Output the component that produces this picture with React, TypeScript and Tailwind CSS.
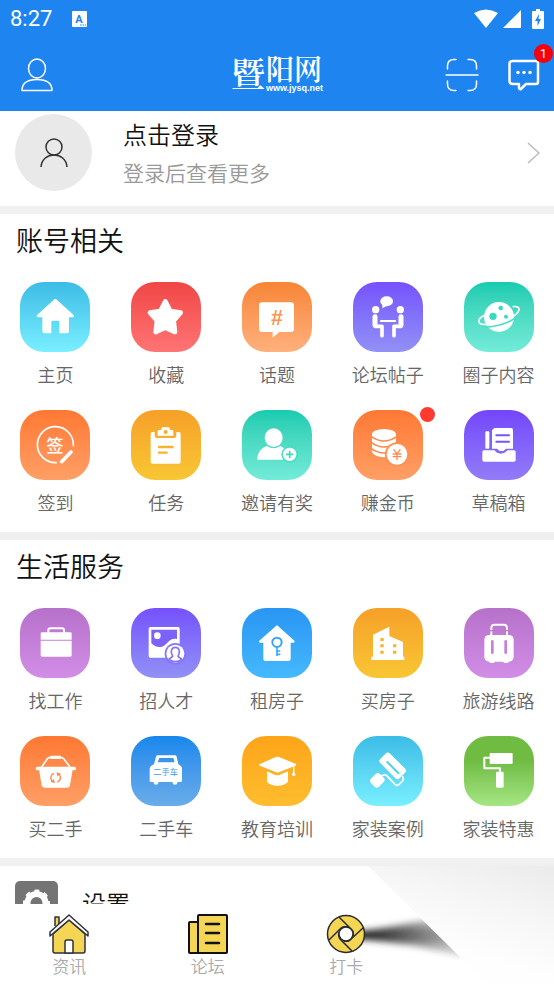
import type { ReactNode } from "react";

type Tile = {
  label: string;
  bg: string;
  icon: ReactNode;
  dot?: boolean;
};

const accountTiles: Tile[] = [
  {
    label: "主页",
    bg: "from-[#3bbce6] to-[#79efff]",
    icon: (
      <>
        <path d="M106 55 158 102H54Z" stroke="#fff" strokeWidth="8" strokeLinejoin="round" />
        <path d="M67 98H147V147Q147 154 140 154H118V120Q118 116 114 116H98Q94 116 94 120V154H74Q67 154 67 147Z" />
      </>
    ),
  },
  {
    label: "收藏",
    bg: "from-[#f04545] to-[#ff7474]",
    icon: (
      <path
        d="M103 58 118 87 149 92 128 116 132 150 103 137 74 150 78 116 57 92 88 87Z"
        stroke="#fff"
        strokeWidth="14"
        strokeLinejoin="round"
      />
    ),
  },
  {
    label: "话题",
    bg: "from-[#f78534] to-[#ffb07c]",
    icon: (
      <>
        <path d="M60 61H147Q156 61 156 70V141Q156 150 147 150H112L92 167V150H60Q51 150 51 141V70Q51 61 60 61Z" />
        <text x="104" y="128" textAnchor="middle" fontSize="64" fontWeight="700" fontStyle="italic" fontFamily="Liberation Sans, sans-serif" fill="#fa9650">
          #
        </text>
      </>
    ),
  },
  {
    label: "论坛帖子",
    bg: "from-[#7650fd] to-[#9290f5]",
    icon: (
      <>
        <ellipse cx="101" cy="58" rx="19" ry="15" />
        <path d="M88 66V79L102 71Z" />
        <circle cx="68" cy="83" r="11" />
        <circle cx="142" cy="83" r="11" />
        <rect x="81" y="114" width="48" height="6" rx="2" />
        <g fill="none" stroke="#fff" strokeLinecap="round" strokeLinejoin="round">
          <path d="M66 104V129M144 104V129" strokeWidth="15" />
          <path d="M66 133H87V161M144 133H123V161" strokeWidth="11" />
        </g>
      </>
    ),
  },
  {
    label: "圈子内容",
    bg: "from-[#14cbb0] to-[#72ecd9]",
    icon: (
      <>
        <circle cx="105" cy="105" r="45" />
        <g fill="#3dd8c0">
          <circle cx="87" cy="103" r="11" />
          <circle cx="110" cy="78" r="7" />
          <circle cx="126" cy="104" r="6" />
        </g>
        <path d="M56 135C85 138 130 126 156 106" fill="none" stroke="#4cdec7" strokeWidth="5" />
        <path
          d="M148 74C171 71 169 87 152 100C130 117 82 130 57 127C38 125 42 109 59 101"
          fill="none"
          stroke="#fff"
          strokeWidth="5"
          strokeLinecap="round"
        />
      </>
    ),
  },
  {
    label: "签到",
    bg: "from-[#ff7832] to-[#ff9f65]",
    icon: (
      <>
        <path d="M160 107A54 54 0 1 0 108 158" fill="none" stroke="#fff" strokeWidth="5" strokeLinecap="round" />
        <text x="105" y="125" textAnchor="middle" fontSize="52" fontWeight="500" fontFamily="Noto Sans CJK SC, sans-serif">
          签
        </text>
        <path d="M153 126 125 155" stroke="#fff" strokeWidth="11" strokeLinecap="round" />
      </>
    ),
  },
  {
    label: "任务",
    bg: "from-[#f6a028] to-[#f8c634]",
    icon: (
      <>
        <path d="M64 66H71V77Q71 84 78 84H129Q136 84 136 77V66H143Q149 66 149 72V155Q149 161 143 161H65Q59 161 59 155V72Q59 66 64 66Z" />
        <path
          fillRule="evenodd"
          d="M93 52H115L118 60H124Q127 60 127 64V77H80V64Q80 60 84 60H90ZM104 60A6 6 0 1 0 104 72A6 6 0 1 0 104 60Z"
        />
        <path d="M84 111H125M84 128H107" stroke="#f7b32e" strokeWidth="7" strokeLinecap="round" />
      </>
    ),
  },
  {
    label: "邀请有奖",
    bg: "from-[#14cbb0] to-[#72ecd9]",
    icon: (
      <>
        <ellipse cx="95" cy="83" rx="27" ry="28" />
        <path d="M46 149C46 127 58 114 75 108Q95 122 115 108L132 118V149Z" />
        <circle cx="143" cy="133" r="25" fill="#49ddc7" />
        <circle cx="143" cy="133" r="20" />
        <path d="M132 133H154M143 122V144" stroke="#3dd8c0" strokeWidth="5" />
      </>
    ),
  },
  {
    label: "赚金币",
    bg: "from-[#ff7832] to-[#ff9f65]",
    dot: true,
    icon: (
      <>
        <path d="M57 73V126Q64 141 93 142Q122 141 129 126V73Z" />
        <ellipse cx="93" cy="73" rx="36" ry="16" />
        <path d="M55 80Q93 106 131 80M55 98Q93 124 131 98M55 116Q93 142 131 116" fill="none" stroke="#ff8747" strokeWidth="5" />
        <circle cx="132" cy="133" r="36" fill="#ff8f50" />
        <circle cx="132" cy="133" r="31" />
        <path d="M122 118 132 131 142 118M119 132H145M119 140H145M132 132V150" fill="none" stroke="#ff8b4b" strokeWidth="4" />
      </>
    ),
  },
  {
    label: "草稿箱",
    bg: "from-[#7445fb] to-[#937bf8]",
    icon: (
      <>
        <rect x="64" y="64" width="12" height="52" rx="3" />
        <path d="M91 54H142Q147 54 147 59V116H126L118 123H107L99 116H84V61Z" />
        <path d="M97 76H135M97 95H135" stroke="#7a54fa" strokeWidth="6" strokeLinecap="round" />
        <path d="M60 121H92Q98 131 111 131Q122 131 130 121H150Q155 121 155 126V150Q155 155 150 155H60Q55 155 55 150V126Q55 121 60 121Z" />
      </>
    ),
  },
];

const lifeTiles: Tile[] = [
  {
    label: "找工作",
    bg: "from-[#b672ca] to-[#d28de6]",
    icon: (
      <>
        <path d="M85 74V66Q85 61 91 61H126Q132 61 132 66V74" fill="none" stroke="#fff" strokeWidth="6" />
        <path d="M66 73H151Q155 73 155 77V95H62V77Q62 73 66 73ZM62 98H155V142Q155 146 151 146H66Q62 146 62 142Z" />
      </>
    ),
  },
  {
    label: "招人才",
    bg: "from-[#7650fd] to-[#9290f5]",
    icon: (
      <>
        <rect x="53" y="57" width="93" height="92" rx="5" />
        <path d="M61 65H138V93C120 89 113 101 103 110C90 122 73 118 61 106Z" fill="#7d62fa" />
        <circle cx="79" cy="83" r="10" />
        <circle cx="133" cy="137" r="32" fill="#8576f8" />
        <circle cx="133" cy="137" r="27" />
        <path
          d="M133 118C120 118 120 130 122 138L125 144C124 149 116 149 114 154Q122 161 133 161Q144 161 152 154C150 149 142 149 141 144L144 138C146 130 146 118 133 118Z"
          fill="#fff"
          stroke="#8576f8"
          strokeWidth="5"
        />
      </>
    ),
  },
  {
    label: "租房子",
    bg: "from-[#2995f2] to-[#45b9fd]",
    icon: (
      <>
        <path
          d="M105 54 154 98Q158 102 154 102H144V153Q144 157 140 157H70Q66 157 66 153V102H55Q51 102 55 98Z"
          stroke="#fff"
          strokeWidth="4"
          strokeLinejoin="round"
        />
        <circle cx="105" cy="103" r="14" fill="none" stroke="#36a5f7" strokeWidth="6" />
        <path d="M105 117V144M105 129H115M105 139H115" fill="none" stroke="#36a8f8" strokeWidth="5" />
      </>
    ),
  },
  {
    label: "买房子",
    bg: "from-[#f6a028] to-[#f8c634]",
    icon: (
      <>
        <path d="M60 80 109 56V84L150 102V146H154V156H55V146H60Z" />
        <path
          d="M82 90h10v9H82ZM82 109h10v9H82ZM82 128h10v9H82ZM120 109h10v9H120ZM120 128h10v9H120Z"
          fill="#f7b22e"
        />
      </>
    ),
  },
  {
    label: "旅游线路",
    bg: "from-[#b672ca] to-[#d28de6]",
    icon: (
      <>
        <path d="M82 83V60Q82 50 92 50H119Q129 50 129 60V83" fill="none" stroke="#fff" strokeWidth="6" />
        <path d="M75 68H137" stroke="#bd78d1" strokeWidth="4" />
        <rect x="61" y="81" width="88" height="80" rx="14" />
        <path d="M77 158h14v7H77ZM119 158h14v7H119Z" />
        <path d="M85 100V134M125 100V134" stroke="#c580d9" strokeWidth="8" strokeLinecap="round" />
      </>
    ),
  },
  {
    label: "买二手",
    bg: "from-[#ff7832] to-[#ff9f65]",
    icon: (
      <>
        <path d="M65 93 82 68Q85 64 91 64H122Q128 64 131 68L150 93" fill="none" stroke="#fff" strokeWidth="5" />
        <rect x="91" y="59" width="32" height="10" rx="2" />
        <rect x="47" y="92" width="121" height="11" rx="5" />
        <path d="M57 100H158L150 148Q149 155 142 155H73Q66 155 65 148Z" />
        <path
          d="M102 112A14 14 0 0 0 101 138M112 138A14 14 0 0 0 113 112M93 136 102 138 100 130M121 114 112 112 114 120"
          fill="none"
          stroke="#ff8b4a"
          strokeWidth="4"
        />
      </>
    ),
  },
  {
    label: "二手车",
    bg: "from-[#1487ec] to-[#69acea]",
    icon: (
      <>
        <path
          fillRule="evenodd"
          d="M80 58H132Q136 58 137 62L142 85Q153 90 153 98V134Q153 138 149 138H139V141Q139 146 132 146Q125 146 125 141V138H82V141Q82 146 75 146Q68 146 68 141V138H60Q56 138 56 134V98Q56 90 69 85L75 62Q76 58 80 58ZM85 66 80 79H131L127 66Z"
        />
        <text x="104" y="117" textAnchor="middle" fontSize="25" fontWeight="400" fontFamily="Noto Sans CJK SC, sans-serif" fill="#3f99eb">
          二手车
        </text>
      </>
    ),
  },
  {
    label: "教育培训",
    bg: "from-[#fea418] to-[#febd2e]",
    icon: (
      <>
        <path d="M52 85 101 63Q106 61 111 63L162 84Q164 87 160 89L112 108Q106 111 101 108L53 89Q50 87 52 85Z" />
        <path d="M75 106 100 117Q106 119 112 117L138 106V137Q128 149 106 149Q84 149 75 137Z" />
        <path d="M155 88V108" stroke="#fff" strokeWidth="4" />
        <path d="M155 104 161 116Q155 124 149 116Z" />
      </>
    ),
  },
  {
    label: "家装案例",
    bg: "from-[#3bbce6] to-[#79efff]",
    icon: (
      <>
        <rect x="78" y="69" width="82" height="41" rx="9" transform="rotate(45 119 89.500)" />
        <path d="M103 78 136 111" stroke="#55cfef" strokeWidth="6" strokeLinecap="round" />
        <rect x="54" y="116" width="38" height="34" rx="9" transform="rotate(-45 73 133)" />
        <path d="M85 120Q99 112 104 122L126 145Q132 151 138 145L149 135Q153 130 149 122" fill="none" stroke="#fff" strokeWidth="5" strokeLinecap="round" />
      </>
    ),
  },
  {
    label: "家装特惠",
    bg: "from-[#70bc43] from-35% to-[#a5e683]",
    icon: (
      <>
        <rect x="77" y="51" width="69" height="33" rx="3" />
        <path d="M78 65H61V97H108V109" fill="none" stroke="#fff" strokeWidth="6" strokeLinejoin="round" />
        <rect x="96" y="107" width="23" height="48" rx="4" />
      </>
    ),
  },
];

function TileSection({ title, tiles }: { title: string; tiles: Tile[] }) {
  return (
    <section className="mb-2 bg-white pb-4">
      <h2 className="mb-4 px-4 text-[27px] leading-[52px] text-[#111]">{title}</h2>
      <div className="grid grid-cols-5 gap-y-[22px]">
        {tiles.map((tile) => (
          <a key={tile.label} href="#" className="flex flex-col items-center gap-2">
            <span className={`relative size-[70px] rounded-[24px] bg-linear-to-b ${tile.bg}`}>
              <svg viewBox="0 0 210 210" className="size-full fill-white" aria-hidden="true">
                {tile.icon}
              </svg>
              {tile.dot && (
                <span className="absolute -top-[3px] -right-[12px] size-[15px] rounded-full bg-[#ff3b30]" />
              )}
            </span>
            <span className="text-[18px] leading-7 whitespace-nowrap text-[#666]">{tile.label}</span>
          </a>
        ))}
      </div>
    </section>
  );
}

function StatusBar() {
  return (
    <div className="flex h-[38px] items-center justify-between px-[10px]">
      <div className="flex items-center gap-5">
        <span className="font-[Roboto,sans-serif] text-[22px] leading-none font-normal">8:27</span>
        <svg viewBox="0 0 16 16" className="size-4" aria-hidden="true">
          <rect width="15" height="16" rx="1" fill="#fff" />
          <text x="7" y="12" textAnchor="middle" fontSize="11" fontWeight="700" fontFamily="Roboto, sans-serif" fill="#1e84f0">
            A
          </text>
          <path d="M8 14h1.500M10.500 14h1.500M13 14h1" stroke="#1e84f0" />
        </svg>
      </div>
      <div className="flex items-center gap-[5px]">
        <svg viewBox="0 0 24 20" className="h-5 w-6 fill-white" aria-hidden="true">
          <path d="M0 4Q12-3 24 4L12 19Z" />
        </svg>
        <svg viewBox="0 0 18 20" className="h-5 w-[18px] fill-white" aria-hidden="true">
          <path d="M18 1V19H0Z" />
        </svg>
        <svg viewBox="0 0 12 20" className="ml-[6px] h-5 w-3 fill-white" aria-hidden="true">
          <path fillRule="evenodd" d="M4 0H8V2H11Q12 2 12 3V19Q12 20 11 20H1Q0 20 0 19V3Q0 2 1 2H4ZM7 5 3 12H5.500V17L9 10H6.500Z" />
        </svg>
      </div>
    </div>
  );
}

function Header() {
  return (
    <header className="shrink-0 bg-[#1e84f0] text-white">
      <StatusBar />
      <div className="grid h-[73px] grid-cols-3 items-center">
        <button aria-label="我的" className="ml-[21px] justify-self-start">
          <svg viewBox="0 0 32 34" className="h-[34px] w-8 fill-none stroke-white" strokeWidth="1.500" aria-hidden="true">
            <ellipse cx="16" cy="10.500" rx="8.500" ry="9.500" />
            <path d="M1 32.500C1 25 7 21.500 16 21.500S31 25 31 32.500Z" strokeLinejoin="round" />
          </svg>
        </button>
        <div className="flex items-start justify-center gap-px">
          <span className="font-['Noto_Serif_CJK_SC','Noto_Sans_CJK_SC',serif] text-[34px] leading-[36px] font-semibold">暨</span>
          <span className="flex flex-col">
            <span className="font-['Noto_Serif_CJK_SC','Noto_Sans_CJK_SC',serif] text-[28px] leading-[26px] font-semibold">阳网</span>
            <span className="font-['Liberation_Sans',sans-serif] text-[9px] leading-[14px] font-bold">www.jysq.net</span>
          </span>
        </div>
        <div className="mr-[14px] flex items-center gap-[29px] justify-self-end">
          <button aria-label="扫一扫">
            <svg viewBox="0 0 34 34" className="size-[34px] fill-none stroke-white" strokeWidth="1.500" strokeLinecap="round" aria-hidden="true">
              <path d="M1 17H33" />
              <path d="M2.500 11V8Q2.500 1.500 9 1.500H11M23 1.500H25Q31.500 1.500 31.500 8V11M2.500 23V26Q2.500 32.500 9 32.500H11M23 32.500H25Q31.500 32.500 31.500 26V23" />
            </svg>
          </button>
          <button aria-label="消息" className="relative">
            <svg viewBox="0 0 32 32" className="size-8 fill-none stroke-white" strokeWidth="2.500" strokeLinejoin="round" aria-hidden="true">
              <path d="M5 2H28Q30 2 30 4V23Q30 25 28 25H18L13 30Q12 31 11 29V25H5Q1.500 25 1.500 22V4.500Q1.500 2 5 2Z" />
              <g className="fill-white stroke-none">
                <circle cx="10" cy="13.500" r="1.700" />
                <circle cx="16" cy="13.500" r="1.700" />
                <circle cx="22" cy="13.500" r="1.700" />
              </g>
            </svg>
            <span className="absolute -top-[15px] -right-[13px] flex size-[19px] items-center justify-center rounded-full bg-[#f8000a] font-[Roboto,sans-serif] text-[13px] leading-none font-normal">
              1
            </span>
          </button>
        </div>
      </div>
    </header>
  );
}

function LoginRow() {
  return (
    <a href="#" className="mb-2 flex h-[95px] items-center bg-white pr-[14px] pb-3 pl-[15px]">
      <span className="flex size-[77px] shrink-0 items-center justify-center rounded-full bg-[#e9e9e9]">
        <svg viewBox="0 0 28 30" className="h-[30px] w-7 fill-none stroke-[#333]" strokeWidth="1.500" aria-hidden="true">
          <circle cx="14" cy="9" r="8" />
          <path d="M1 29C2 13 26 13 27 29" />
        </svg>
      </span>
      <span className="ml-[31px] flex grow flex-col">
        <span className="text-[24px] leading-[38px] text-[#111]">点击登录</span>
        <span className="text-[21px] leading-[38px] text-[#999]">登录后查看更多</span>
      </span>
      <svg viewBox="0 0 13 22" className="h-[22px] w-[13px] fill-none stroke-[#bbb]" strokeWidth="1.500" aria-hidden="true">
        <path d="M1 1 12 11 1 21" />
      </svg>
    </a>
  );
}

const navItems = [
  {
    label: "资讯",
    icon: (
      <g stroke="#2f3140" strokeWidth="1.500" strokeLinejoin="round">
        <path d="M6 12V3H10V10" fill="#f5d654" />
        <path d="M4 20 20 6 36 20V37Q36 39 34 39H6Q4 39 4 37Z" fill="#f5d654" />
        <path d="M16 39V28Q16 26 18 26H22Q24 26 24 28V39Z" fill="#fff" />
        <path d="M1 18 20 1 39 18V22L20 6 1 22Z" fill="#fff" />
      </g>
    ),
  },
  {
    label: "论坛",
    icon: (
      <g stroke="#111" strokeWidth="2" strokeLinejoin="round" strokeLinecap="round">
        <rect x="1" y="8" width="10" height="31" rx="1" fill="#f5d654" />
        <rect x="10" y="1" width="29" height="38" rx="1" fill="#f5d654" />
        <path d="M18 10H31M18 19H31M18 29H31" strokeWidth="2.500" />
      </g>
    ),
  },
  {
    label: "打卡",
    icon: (
      <g stroke="#2b2b2b" strokeWidth="1.500">
        <circle cx="20" cy="20" r="18.500" fill="#f5d654" />
        <path d="M13 3 26 16Q28 18 27 22M37 14 24 26Q22 28 18 27M26 37 14 25Q12 22 13 18M3 26 15 14Q18 12 22 13" fill="none" />
        <circle cx="20" cy="20" r="7" fill="#fff" />
      </g>
    ),
  },
];

function BottomNav() {
  return (
    <nav className="relative grid h-20 shrink-0 grid-cols-4 bg-white">
      {navItems.map((item) => (
        <a key={item.label} href="#" className="relative z-10 flex flex-col items-center pt-[10px]">
          <svg viewBox="0 0 40 40" className="size-10" aria-hidden="true">
            {item.icon}
          </svg>
          <span className="text-[17px] leading-6 text-[#aaa]">{item.label}</span>
        </a>
      ))}
      {/* turned page corner with its shadow */}
      <svg viewBox="0 0 200 118" className="pointer-events-none absolute right-0 bottom-0 h-[118px] w-[200px]" aria-hidden="true">
        <defs>
          <linearGradient id="curl" gradientUnits="userSpaceOnUse" x1="150" y1="-10" x2="120" y2="90">
            <stop offset="0" stopColor="#ececec" />
            <stop offset="0.500" stopColor="#f6f6f6" />
            <stop offset="1" stopColor="#fefefe" />
          </linearGradient>
          <linearGradient id="shade" gradientUnits="userSpaceOnUse" x1="8" y1="0" x2="106" y2="0">
            <stop offset="0" stopColor="#222" />
            <stop offset="0.300" stopColor="#4a4a4a" />
            <stop offset="0.700" stopColor="#8a8a8a" />
            <stop offset="1" stopColor="#bbb" />
          </linearGradient>
          <filter id="soft" x="-20%" y="-60%" width="140%" height="220%">
            <feGaussianBlur stdDeviation="3" />
          </filter>
          <clipPath id="page">
            <path d="M0 0H14L106 91V118H0Z" />
          </clipPath>
        </defs>
        <path d="M14 0H200V118H134Z" fill="url(#curl)" />
        <g clipPath="url(#page)">
          <g fill="url(#shade)" filter="url(#soft)">
            <path d="M4 66 60 56 130 48V94L60 80 4 73Z" opacity="0.700" />
            <path d="M0 65 60 62 130 64V80L60 76 0 73Z" />
          </g>
        </g>
      </svg>
    </nav>
  );
}

export default function App() {
  return (
    <div
      lang="zh-CN"
      className="flex h-screen flex-col overflow-hidden bg-[#f0f0f0] font-['Noto_Sans_CJK_SC',sans-serif] font-[350]"
    >
      <Header />
      <main className="min-h-0 flex-1 overflow-hidden">
        <LoginRow />
        <TileSection title="账号相关" tiles={accountTiles} />
        <TileSection title="生活服务" tiles={lifeTiles} />
        <a href="#" className="flex items-center gap-6 bg-white px-[15px] py-[15px]">
          <svg viewBox="0 0 43 43" className="size-[43px]" aria-hidden="true">
            <rect width="43" height="43" rx="5" fill="#747474" />
            <circle cx="21.500" cy="22" r="9" fill="none" stroke="#fff" strokeWidth="6" />
            <circle cx="21.500" cy="22" r="11.500" fill="none" stroke="#fff" strokeWidth="4" strokeDasharray="4.500 4.530" strokeDashoffset="2.250" />
          </svg>
          <span className="text-[24px] leading-[43px] text-[#111]">设置</span>
        </a>
      </main>
      <BottomNav />
    </div>
  );
}
